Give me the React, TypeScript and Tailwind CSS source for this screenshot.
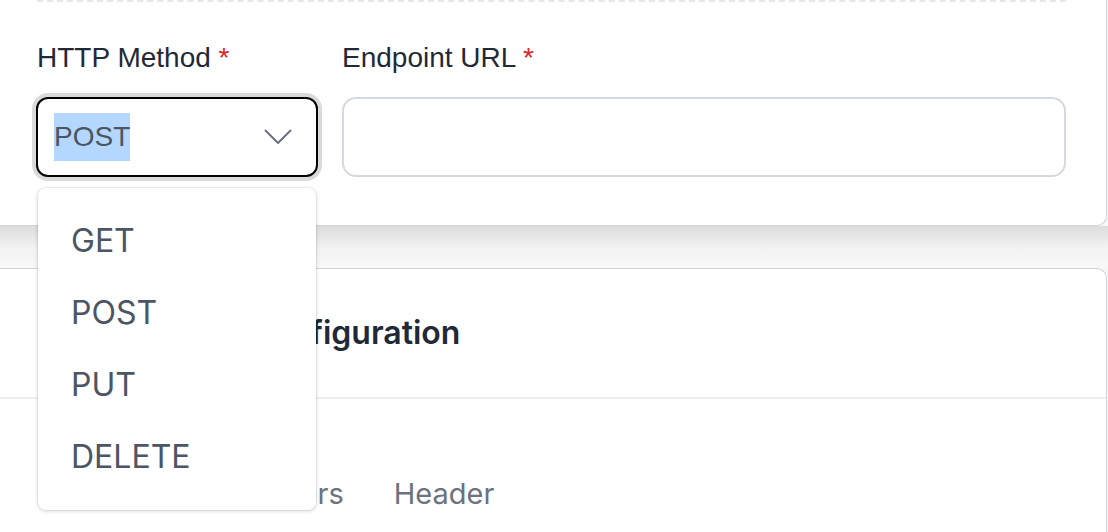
const methods = ["GET", "POST", "PUT", "DELETE"]

const tabs = ["Query Parameters", "Header"]

function ChevronDown() {
  return (
    <svg width="28" height="16" viewBox="0 0 28 16" fill="none" className="shrink-0">
      <path d="M1.5 1.5 14 14 26.5 1.5" stroke="#6b7280" strokeWidth="2" strokeLinecap="round" strokeLinejoin="round" />
    </svg>
  )
}

export default function App() {
  return (
    <div className="relative flex h-[532px] w-[1108px] flex-col overflow-hidden bg-[#f7f7f7] font-['Liberation_Sans',Arial,sans-serif]">
      {/* request card */}
      <section className="w-[1107px] shrink-0 rounded-br-[10px] border-r border-b border-[#d1d5db] bg-white pr-[40px] pb-[48px] pl-[37px]">
        <div className="border-t-2 border-dashed border-[#e5e7eb]" />
        <div className="mt-[40px] flex gap-[24px]">
          <div className="flex w-[281px] flex-col gap-[23px]">
            <label className="text-[28px] leading-[32px] text-[#1f2937]">
              HTTP Method <span className="text-[#dc2626]">*</span>
            </label>
            <div className="-ml-px flex h-[80px] items-center justify-between rounded-[12px] border-2 border-black bg-white pr-[24px] pl-[16px] shadow-[0_0_0_4px_#dadada]">
              <span className="bg-[#b3d7ff] py-[8px] text-[28px] leading-[32px] text-[#4b5563]">POST</span>
              <ChevronDown />
            </div>
          </div>
          <div className="flex flex-1 flex-col gap-[23px]">
            <label className="text-[28px] leading-[32px] text-[#1f2937]">
              Endpoint URL <span className="text-[#dc2626]">*</span>
            </label>
            <div className="h-[80px] rounded-[14px] border-2 border-[#d5d9e0] bg-white" />
          </div>
        </div>
      </section>

      <div className="h-[42px] shrink-0 bg-gradient-to-b from-[#dcdcdc] via-[#f2f2f2] to-[#f8f8f8]" />

      {/* configuration card */}
      <section className="w-[1107px] flex-1 rounded-tr-[10px] border-t border-r border-[#d1d5db] bg-white font-['Inter',sans-serif]">
        <div className="flex h-[130px] items-center border-b-2 border-[#eef0f3] pl-[52px]">
          <h2 className="text-[32px] font-semibold text-[#1f2937]">API Request Configuration</h2>
        </div>
        <div className="flex gap-[50px] pt-[73px] pl-[95px] text-[29px] text-[#6b7280]">
          {tabs.map((tab) => (
            <span key={tab}>{tab}</span>
          ))}
        </div>
      </section>

      {/* native select popup */}
      <ul className="absolute top-[188px] left-[38px] w-[278px] rounded-[8px] bg-white pt-[17px] pb-[17px] font-['Inter',sans-serif] shadow-[0_1px_4px_rgba(0,0,0,0.18),0_0_0_1px_rgba(0,0,0,0.04)]">
        {methods.map((m) => (
          <li key={m} className="flex h-[72px] items-center pl-[33px] text-[32px] text-[#4b5563]">
            {m}
          </li>
        ))}
      </ul>
    </div>
  )
}
